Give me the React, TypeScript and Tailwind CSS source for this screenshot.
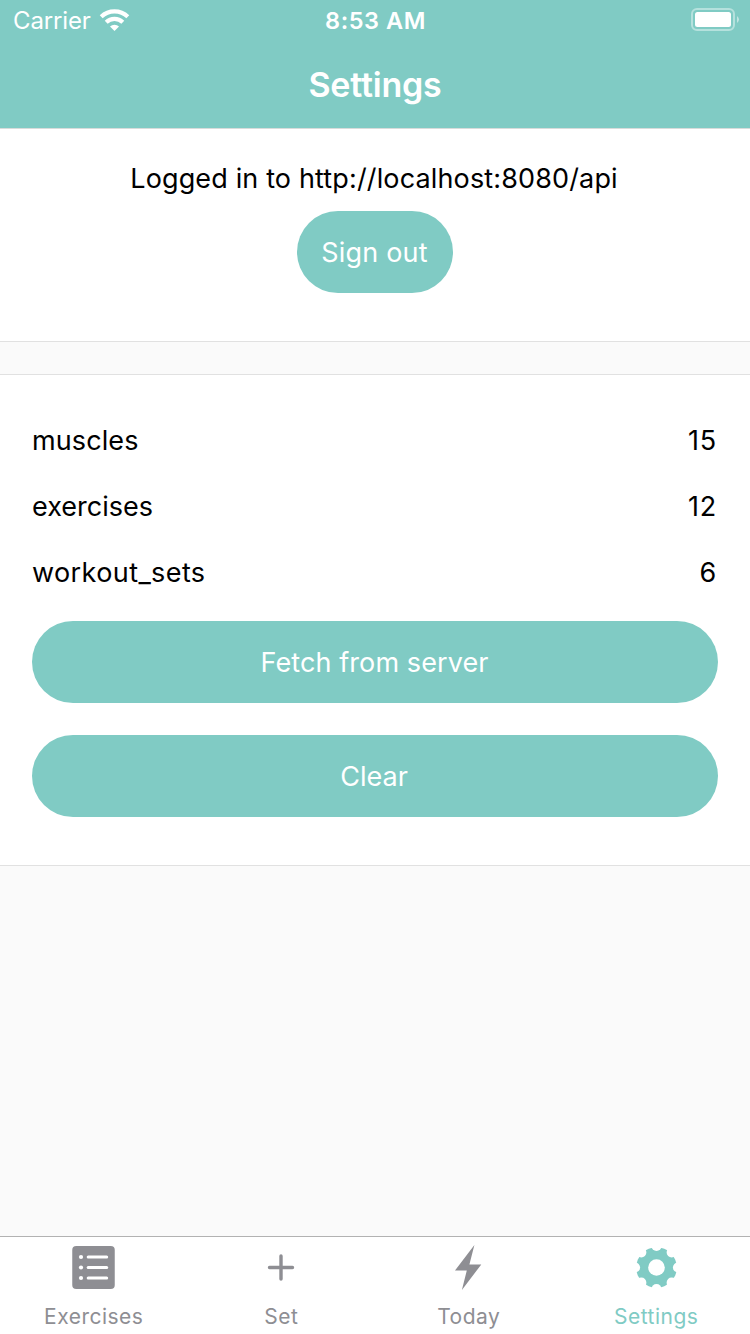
import React from 'react';

const rows = [
  { name: 'muscles', count: 15, nameClass: 'tracking-[0.1px]' },
  { name: 'exercises', count: 12, nameClass: '' },
  { name: 'workout_sets', count: 6, nameClass: 'tracking-[0.4px]' },
];

function WifiIcon() {
  return (
    <svg width="31" height="24" viewBox="0 0 31 24" fill="none" stroke="white" strokeWidth="4.200">
      <path d="M2.200 8.700a19.300 19.300 0 0 1 26.600 0M7.200 14.200a12 12 0 0 1 16.600 0" />
      <path d="M15.500 23l-4.500-4.500a6.600 6.600 0 0 1 9 0z" fill="white" stroke="none" />
    </svg>
  );
}

function BatteryIcon() {
  return (
    <svg width="49" height="24" viewBox="0 0 49 24" fill="none">
      <rect x="1" y="1" width="42" height="21" rx="5" stroke="white" strokeOpacity=".42" strokeWidth="2" />
      <rect x="4" y="4" width="36" height="15" rx="2.500" fill="white" />
      <path d="M46 8q4 3.500 0 7z" fill="white" fillOpacity=".5" />
    </svg>
  );
}

function ListIcon() {
  return (
    <svg width="48" height="48" viewBox="-24 -24.500 48 48">
      <rect x="-21.750" y="-21.500" width="42.500" height="43" rx="4" fill="currentColor" />
      {[-10.5, 0, 10.5].map((y) => (
        <g key={y} fill="white">
          <circle cx="-13" cy={y} r="2.100" />
          <rect x="-7.300" y={y - 1.5} width="21.500" height="3" rx="1.500" />
        </g>
      ))}
    </svg>
  );
}

function PlusIcon() {
  return (
    <svg width="48" height="48" viewBox="-24 -24.500 48 48" stroke="currentColor" strokeWidth="3.400" strokeLinecap="round">
      <path d="M-11.500 0H11.500M0-11.500V11.500" />
    </svg>
  );
}

function BoltIcon() {
  return (
    <svg width="48" height="48" viewBox="-24 -24.500 48 48" fill="currentColor">
      <path d="M5.400-22.500L.4-3.100H12.300L-7.100 22.500-2.200 3H-14Z" />
    </svg>
  );
}

function GearIcon() {
  return (
    <svg width="48" height="48" viewBox="-24.500 -24.500 48 48">
      <mask id="gear-cut" maskUnits="userSpaceOnUse" x="-24" y="-24" width="48" height="48">
        <circle r="20.300" fill="white" />
        <circle r="8.300" fill="black" />
        {[0, 45, 90, 135, 180, 225, 270, 315].map((a) => (
          <circle key={a} cy="-21.500" r="5.100" fill="black" transform={`rotate(${a})`} />
        ))}
      </mask>
      <rect x="-24" y="-24" width="48" height="48" fill="currentColor" mask="url(#gear-cut)" />
    </svg>
  );
}

const tabs = [
  { label: 'Exercises', Icon: ListIcon, className: 'text-[#8e8e93]' },
  { label: 'Set', Icon: PlusIcon, className: 'text-[#8e8e93]' },
  { label: 'Today', Icon: BoltIcon, className: 'text-[#8e8e93]' },
  { label: 'Settings', Icon: GearIcon, className: 'text-[#80cbc4]' },
];

function StatusBar() {
  return (
    <div className="flex h-10 items-center justify-between pl-[13px] pr-[10px] text-[24px]">
      <div className="flex flex-1 items-center gap-2">
        <span className="pt-0.5 tracking-[-0.15px]">Carrier</span>
        <WifiIcon />
      </div>
      <span className="pr-[2px] pt-0.5 text-[23.500px] font-semibold tracking-[0.55px]">8:53 AM</span>
      <div className="flex flex-1 justify-end">
        <BatteryIcon />
      </div>
    </div>
  );
}

export default function App() {
  return (
    <div className="flex h-[1334px] w-[750px] flex-col bg-[#fafafa] font-['Inter',sans-serif] text-[27px] text-black">
      <header className="h-[129px] border-b border-[#d8dcdb] bg-[#80cbc4] text-white">
        <StatusBar />
        <h1 className="flex h-[88px] items-center justify-center text-[34px] font-semibold tracking-[-0.2px]">Settings</h1>
      </header>
      <section className="flex h-[213px] flex-col items-center border-b border-[#e1e1e1] bg-white pt-[33px]">
        <p className="h-[33px] pr-0.5 leading-[33px] tracking-[0.14px]">Logged in to http://localhost:8080/api</p>
        <button className="mt-4 h-[82px] w-[156px] rounded-full bg-[#80cbc4] pr-px pt-0.5 tracking-[0.2px] text-white">Sign out</button>
      </section>
      <section className="mt-8 flex h-[492px] flex-col border-y border-[#e1e1e1] bg-white px-8 pt-8">
        {rows.map((r) => (
          <div key={r.name} className="flex h-[66px] items-center justify-between pt-0.5">
            <span className={r.nameClass}>{r.name}</span>
            <span className="pr-px tracking-[0.8px]">{r.count}</span>
          </div>
        ))}
        <button className="mt-4 h-[82px] rounded-full bg-[#80cbc4] pr-px pt-0.5 tracking-[0.1px] text-white">Fetch from server</button>
        <button className="mt-8 h-[82px] rounded-full bg-[#80cbc4] pr-0.5 pt-0.5 text-white">Clear</button>
      </section>
      <nav className="mt-auto grid h-[98px] grid-cols-4 border-t border-[#b2b2b2] bg-white">
        {tabs.map(({ label, Icon, className }) => (
          <div key={label} className={`flex flex-col items-center pt-[6px] ${className}`}>
            <Icon />
            <span className="mt-[12px] text-[21px] leading-[28px] tracking-[0.5px]">{label}</span>
          </div>
        ))}
      </nav>
    </div>
  );
}
